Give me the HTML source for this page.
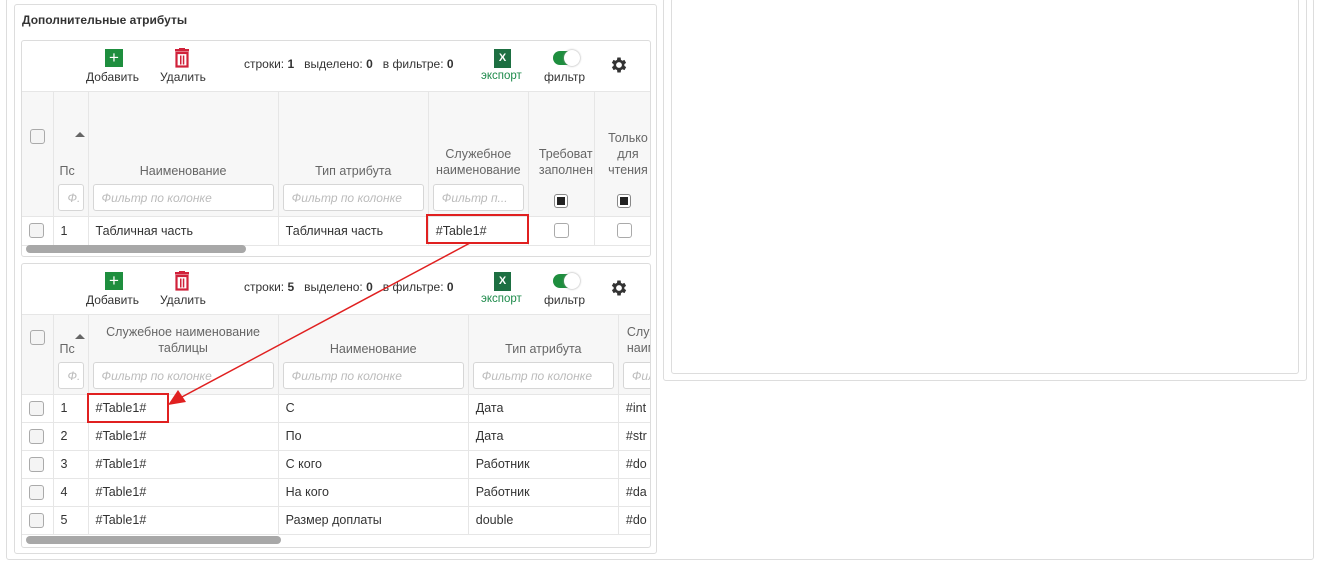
<!DOCTYPE html>
<html><head><meta charset="utf-8"><style>
*{box-sizing:border-box;margin:0;padding:0}
body{width:1318px;height:563px;background:#fff;font-family:"Liberation Sans",sans-serif;font-size:12.5px;color:#333;position:relative;overflow:hidden}
.a{position:absolute}
.grid{position:absolute;left:21px;width:630px;border:1px solid #dcdcdc;border-radius:3px;overflow:hidden;background:#fff}
.tb{position:relative;height:51px;border-bottom:1px solid #e6e6e6}
.tb .lbl{position:absolute;font-size:12px;color:#333}
table{border-collapse:collapse;table-layout:fixed;position:absolute;left:0}
td,th{border-right:1px solid #e6e6e6;border-bottom:1px solid #e6e6e6;overflow:hidden;white-space:nowrap;font-weight:normal}
th{background:#f7f7f7;color:#666;font-size:12.5px;vertical-align:bottom;text-align:center;position:relative}
td{padding-left:7px;font-size:12.5px;color:#333}
.cb{display:inline-block;width:15px;height:15px;border:1px solid #aaa;border-radius:3px;background:#f4f4f4;vertical-align:middle}
.fi{position:absolute;left:4px;right:4px;height:27px;border:1px solid #d6d6d6;border-radius:3px;background:#fff;color:#bbb;font-style:italic;font-size:12px;text-align:left;padding:6px 8px;overflow:hidden}
.sc{position:absolute;height:8px;border-radius:4px;background:#a8a8a8;left:4px}
.red{position:absolute;border:2px solid #e02020}
</style></head><body>
<div class="a" style="left:6px;top:-2px;width:1308px;height:562px;border:1px solid #ddd;border-radius:3px"></div>
<div class="a" style="left:14px;top:4px;width:643px;height:550px;border:1px solid #ddd;border-radius:3px"></div>
<div class="a" style="left:663px;top:-2px;width:644px;height:383px;border:1px solid #ddd;border-radius:3px"></div>
<div class="a" style="left:671px;top:-2px;width:628px;height:376px;border:1px solid #ddd;border-radius:3px"></div>
<div class="a" style="left:22px;top:13px;font-weight:bold;font-size:12px;color:#333">Дополнительные атрибуты</div>

<!-- grid 1 -->
<div class="grid" style="top:40px;height:217px">
 <div class="tb">
  <div class="a" style="left:83px;top:8px;width:18px;height:18px;background:#1e8e3e;color:#fff;text-align:center;line-height:18px;font-size:17px">+</div>
  <div class="lbl" style="left:64px;top:29px">Добавить</div>
  <svg class="a" style="left:152px;top:7px" width="16" height="20" viewBox="0 0 16 20"><rect x="1" y="1" width="14" height="2.5" fill="#d0213a"/><rect x="5" y="0" width="6" height="2" fill="#d0213a"/><rect x="2.5" y="5" width="11" height="13.5" fill="none" stroke="#d0213a" stroke-width="2.2"/><rect x="6" y="7.5" width="1.5" height="9" fill="#d0213a"/><rect x="8.8" y="7.5" width="1.5" height="9" fill="#d0213a"/></svg>
  <div class="lbl" style="left:138px;top:29px">Удалить</div>
  <div class="lbl" style="left:222px;top:16px;font-size:12px">строки: <b>1</b> &nbsp; выделено: <b>0</b> &nbsp; в фильтре: <b>0</b></div>
  <div class="a" style="left:472px;top:8px;width:17px;height:19px;background:#1d6f42;color:#fff;font-size:11px;font-weight:bold;text-align:center;line-height:19px">X</div>
  <div class="lbl" style="left:459px;top:29px;color:#1d8a4a;font-size:11.5px">экспорт</div>
  <div class="a" style="left:531px;top:10px;width:26px;height:14px;border-radius:7px;background:#1e8e3e"></div>
  <div class="a" style="left:542px;top:9px;width:16px;height:16px;border-radius:8px;background:#fff;box-shadow:0 0 2px #999"></div>
  <div class="lbl" style="left:522px;top:29px">фильтр</div>
  <svg class="a" style="left:587px;top:14px" width="20" height="20" viewBox="0 0 24 24"><path fill="#333" d="M19.4 13a7.5 7.5 0 0 0 0-2l2.1-1.6-2-3.5-2.5 1a7.4 7.4 0 0 0-1.7-1L15 3h-4l-.4 2.9a7.4 7.4 0 0 0-1.7 1l-2.5-1-2 3.5L6.6 11a7.5 7.5 0 0 0 0 2l-2.1 1.6 2 3.5 2.5-1a7.4 7.4 0 0 0 1.7 1L11 21h4l.4-2.9a7.4 7.4 0 0 0 1.7-1l2.5 1 2-3.5zM13 15.5a3.5 3.5 0 1 1 0-7 3.5 3.5 0 0 1 0 7z" transform="translate(-1 0)"/></svg>
 </div>
 <table style="top:51px;width:640px">
  <colgroup><col style="width:31px"><col style="width:35px"><col style="width:190px"><col style="width:150px"><col style="width:100px"><col style="width:66px"><col style="width:67px"></colgroup>
  <tr style="height:124px">
   <th style="vertical-align:top;padding-top:37px"><span class="cb"></span></th>
   <th style="text-align:left;padding-left:6px"><div class="a" style="left:21px;top:40px;border-left:5px solid transparent;border-right:5px solid transparent;border-bottom:5px solid #666"></div><div style="margin-bottom:38px">Пс</div><div class="fi" style="bottom:5px;padding:6px 9px">Ф.</div></th>
   <th><div style="margin-bottom:38px">Наименование</div><div class="fi" style="bottom:5px">Фильтр по колонке</div></th>
   <th><div style="margin-bottom:38px">Тип атрибута</div><div class="fi" style="bottom:5px">Фильтр по колонке</div></th>
   <th><div style="margin-bottom:38px;line-height:16px">Служебное<br>наименование</div><div class="fi" style="bottom:5px">Фильтр п...</div></th>
   <th style="text-align:left;padding-left:10px"><div style="margin-bottom:38px;line-height:16px">Требоват<br>заполнен</div><div class="a" style="left:25px;bottom:8px;width:14px;height:14px;border:1px solid #888;border-radius:3px;background:#fff;padding:2px"><div style="width:8px;height:8px;background:#222"></div></div></th>
   <th><div style="margin-bottom:38px;line-height:16px">Только<br>для<br>чтения</div><div class="a" style="left:22px;bottom:8px;width:14px;height:14px;border:1px solid #888;border-radius:3px;background:#fff;padding:2px"><div style="width:8px;height:8px;background:#222"></div></div></th>
  </tr>
  <tr style="height:29px"><td style="padding-left:7px"><span class="cb"></span></td><td>1</td><td>Табличная часть</td><td>Табличная часть</td><td>#Table1#</td><td style="padding-left:25px"><span class="cb" style="background:#fff"></span></td><td style="padding-left:22px"><span class="cb" style="background:#fff"></span></td></tr>
 </table>
 <div class="sc" style="top:204px;width:220px"></div>
</div>

<!-- grid 2 -->
<div class="grid" style="top:263px;height:285px">
 <div class="tb">
  <div class="a" style="left:83px;top:8px;width:18px;height:18px;background:#1e8e3e;color:#fff;text-align:center;line-height:18px;font-size:17px">+</div>
  <div class="lbl" style="left:64px;top:29px">Добавить</div>
  <svg class="a" style="left:152px;top:7px" width="16" height="20" viewBox="0 0 16 20"><rect x="1" y="1" width="14" height="2.5" fill="#d0213a"/><rect x="5" y="0" width="6" height="2" fill="#d0213a"/><rect x="2.5" y="5" width="11" height="13.5" fill="none" stroke="#d0213a" stroke-width="2.2"/><rect x="6" y="7.5" width="1.5" height="9" fill="#d0213a"/><rect x="8.8" y="7.5" width="1.5" height="9" fill="#d0213a"/></svg>
  <div class="lbl" style="left:138px;top:29px">Удалить</div>
  <div class="lbl" style="left:222px;top:16px;font-size:12px">строки: <b>5</b> &nbsp; выделено: <b>0</b> &nbsp; в фильтре: <b>0</b></div>
  <div class="a" style="left:472px;top:8px;width:17px;height:19px;background:#1d6f42;color:#fff;font-size:11px;font-weight:bold;text-align:center;line-height:19px">X</div>
  <div class="lbl" style="left:459px;top:29px;color:#1d8a4a;font-size:11.5px">экспорт</div>
  <div class="a" style="left:531px;top:10px;width:26px;height:14px;border-radius:7px;background:#1e8e3e"></div>
  <div class="a" style="left:542px;top:9px;width:16px;height:16px;border-radius:8px;background:#fff;box-shadow:0 0 2px #999"></div>
  <div class="lbl" style="left:522px;top:29px">фильтр</div>
  <svg class="a" style="left:587px;top:14px" width="20" height="20" viewBox="0 0 24 24"><path fill="#333" d="M19.4 13a7.5 7.5 0 0 0 0-2l2.1-1.6-2-3.5-2.5 1a7.4 7.4 0 0 0-1.7-1L15 3h-4l-.4 2.9a7.4 7.4 0 0 0-1.7 1l-2.5-1-2 3.5L6.6 11a7.5 7.5 0 0 0 0 2l-2.1 1.6 2 3.5 2.5-1a7.4 7.4 0 0 0 1.7 1L11 21h4l.4-2.9a7.4 7.4 0 0 0 1.7-1l2.5 1 2-3.5zM13 15.5a3.5 3.5 0 1 1 0-7 3.5 3.5 0 0 1 0 7z" transform="translate(-1 0)"/></svg>
 </div>
 <table style="top:51px;width:680px">
  <colgroup><col style="width:31px"><col style="width:35px"><col style="width:190px"><col style="width:190px"><col style="width:150px"><col style="width:83px"></colgroup>
  <tr style="height:79px">
   <th style="vertical-align:top;padding-top:15px"><span class="cb"></span></th>
   <th style="text-align:left;padding-left:6px"><div class="a" style="left:21px;top:19px;border-left:5px solid transparent;border-right:5px solid transparent;border-bottom:5px solid #666"></div><div style="margin-bottom:38px">Пс</div><div class="fi" style="bottom:5px;padding:6px 9px">Ф.</div></th>
   <th><div style="margin-bottom:38px;line-height:16px">Служебное наименование<br>таблицы</div><div class="fi" style="bottom:5px">Фильтр по колонке</div></th>
   <th><div style="margin-bottom:38px">Наименование</div><div class="fi" style="bottom:5px">Фильтр по колонке</div></th>
   <th><div style="margin-bottom:38px">Тип атрибута</div><div class="fi" style="bottom:5px">Фильтр по колонке</div></th>
   <th style="text-align:left"><div style="margin-bottom:38px;line-height:16px;padding-left:8px">Служебное<br>наименование</div><div class="fi" style="bottom:5px">Фильтр</div></th>
  </tr>
  <tr style="height:28px"><td style="padding-left:7px"><span class="cb"></span></td><td>1</td><td>#Table1#</td><td>С</td><td>Дата</td><td>#int</td></tr>
  <tr style="height:28px"><td style="padding-left:7px"><span class="cb"></span></td><td>2</td><td>#Table1#</td><td>По</td><td>Дата</td><td>#str</td></tr>
  <tr style="height:28px"><td style="padding-left:7px"><span class="cb"></span></td><td>3</td><td>#Table1#</td><td>С кого</td><td>Работник</td><td>#do</td></tr>
  <tr style="height:28px"><td style="padding-left:7px"><span class="cb"></span></td><td>4</td><td>#Table1#</td><td>На кого</td><td>Работник</td><td>#da</td></tr>
  <tr style="height:28px"><td style="padding-left:7px"><span class="cb"></span></td><td>5</td><td>#Table1#</td><td>Размер доплаты</td><td>double</td><td>#do</td></tr>
 </table>
 <div class="sc" style="top:272px;width:255px"></div>
</div>

<div class="red" style="left:426px;top:214px;width:103px;height:30px"></div>
<div class="red" style="left:87px;top:393px;width:82px;height:30px"></div>
<svg class="a" style="left:0;top:0" width="1318" height="563"><line x1="470" y1="243" x2="180" y2="398" stroke="#e02020" stroke-width="1.5"/><polygon points="168,405 178,390 186,402" fill="#e02020"/></svg>
</body></html>
